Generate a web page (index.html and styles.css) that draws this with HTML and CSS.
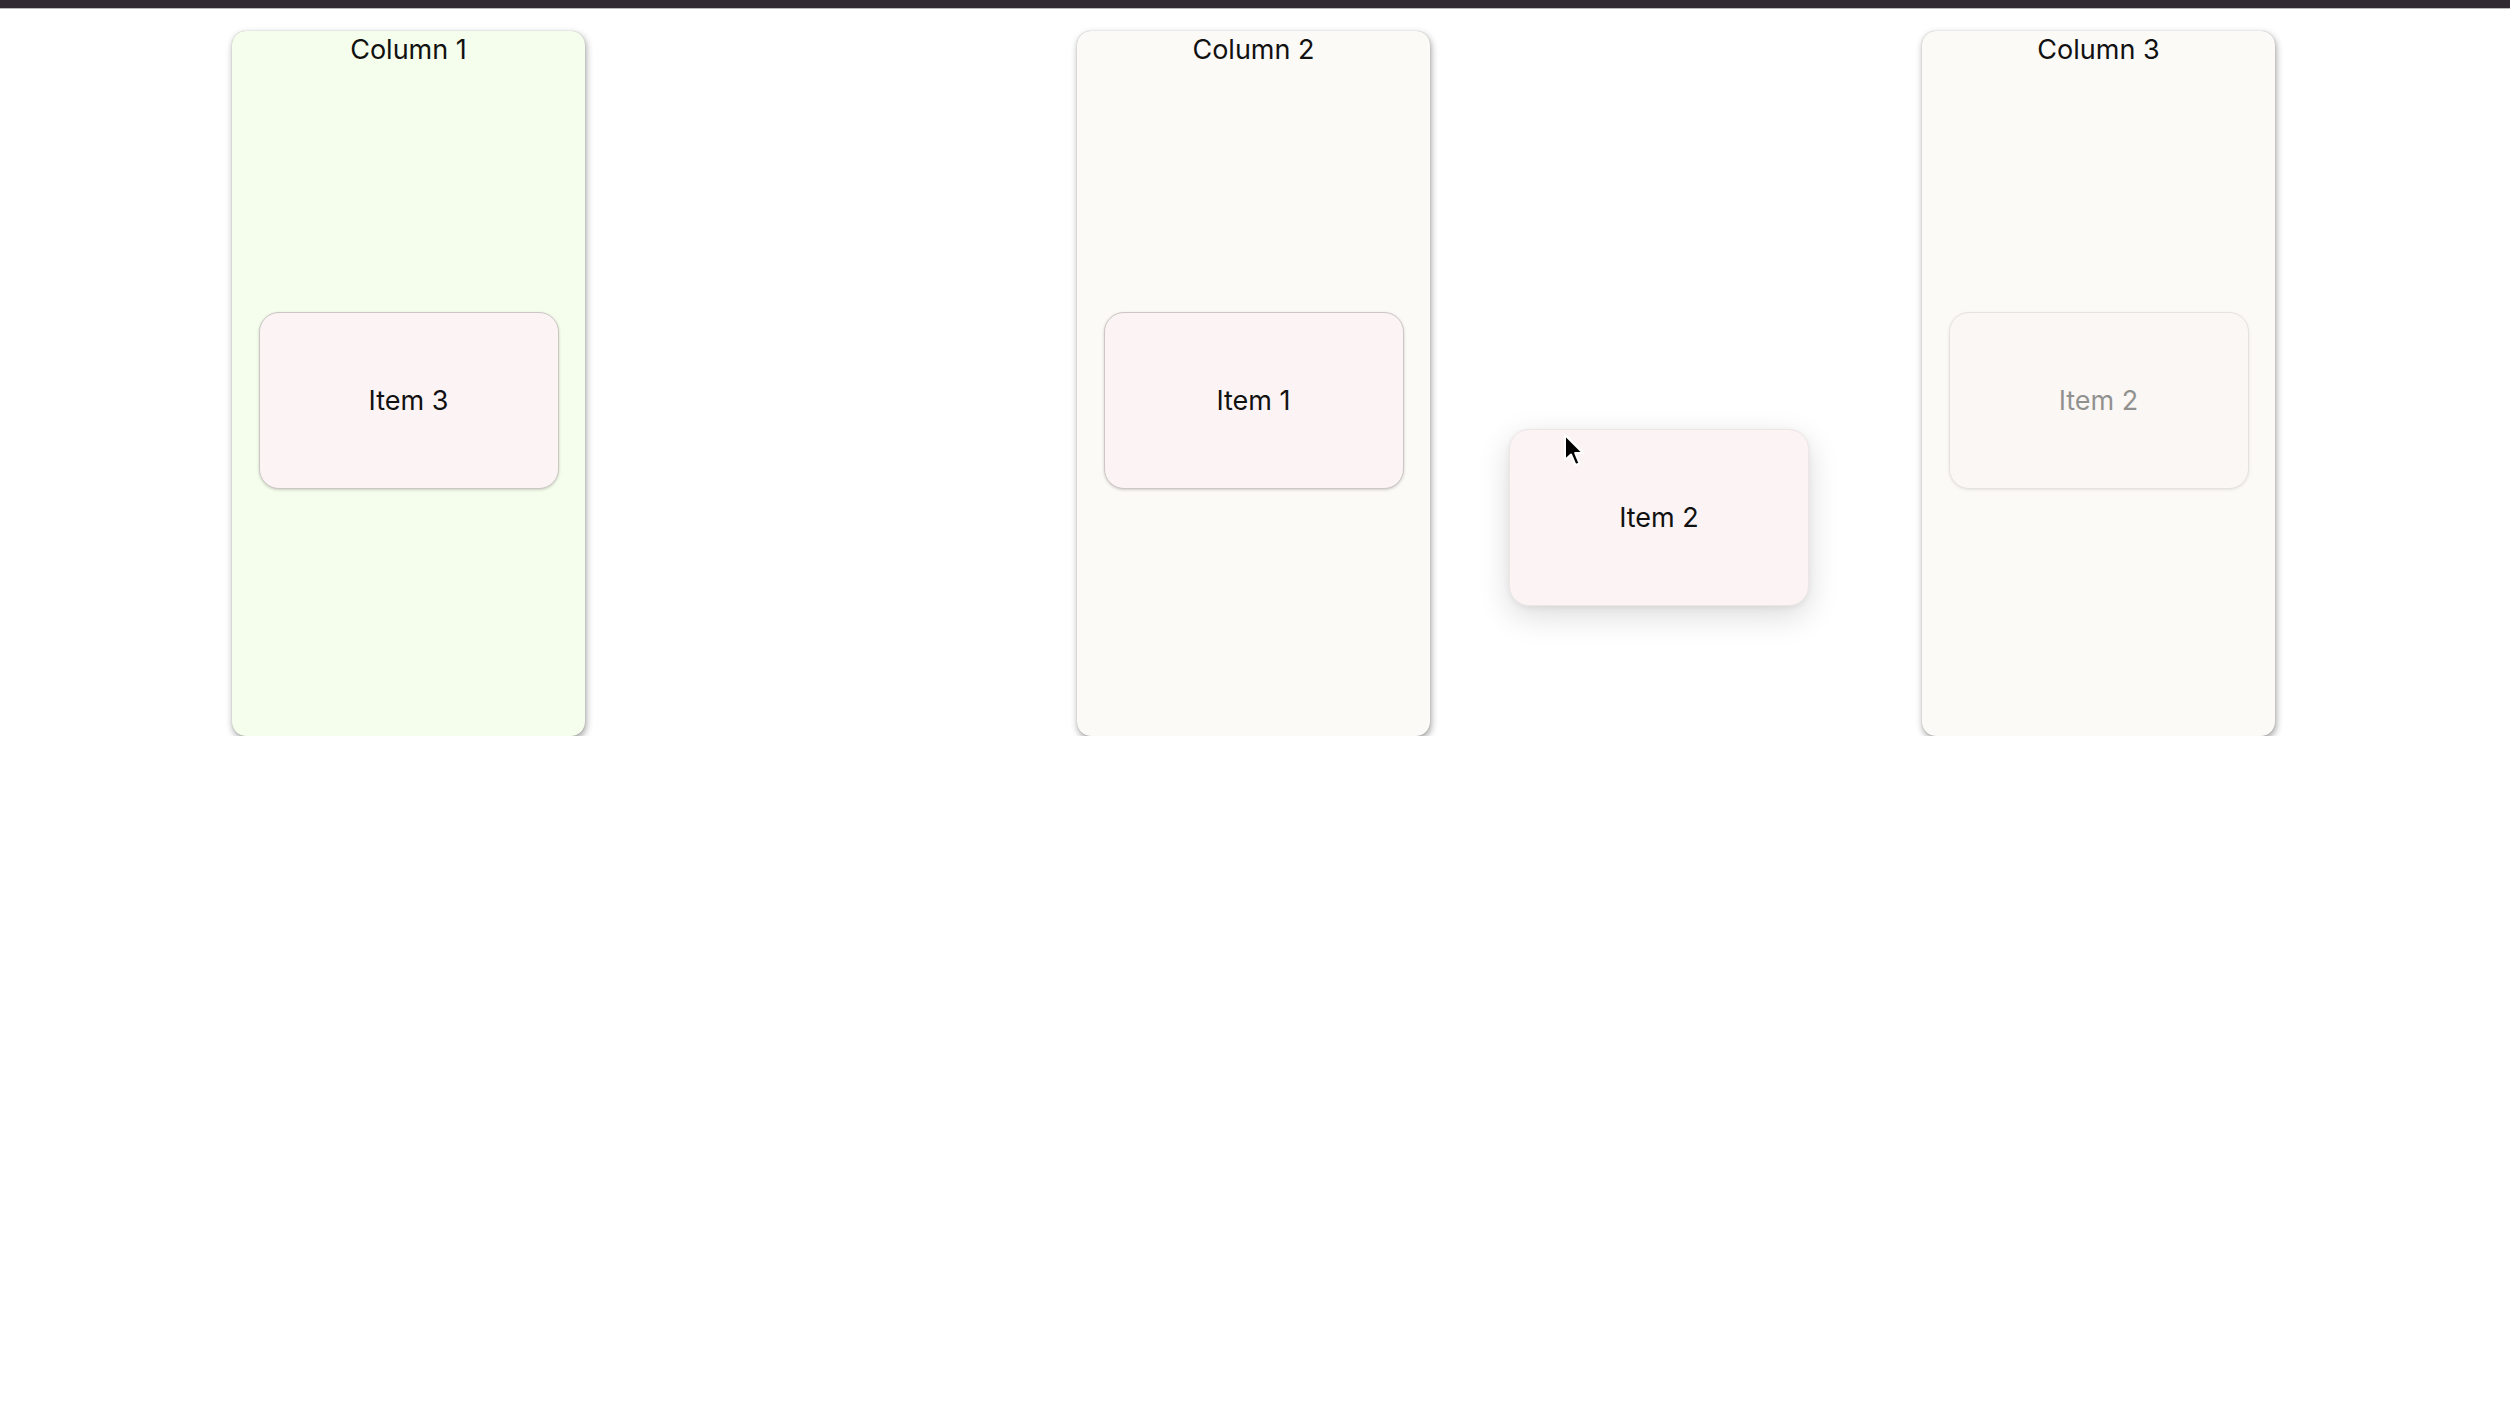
FILE: index.html
```html
<!DOCTYPE html>
<html>
<head>
<meta charset="utf-8">
<link rel="stylesheet" href="styles.css">
</head>
<body>
<div class="topbar"></div>
<div class="board">
  <div class="column column-green">
    <div class="title">Column 1</div>
    <div class="card">Item 3</div>
  </div>
  <div class="column">
    <div class="title">Column 2</div>
    <div class="card">Item 1</div>
  </div>
  <div class="column">
    <div class="title">Column 3</div>
    <div class="card card-ghost">Item 2</div>
  </div>
</div>
<div class="card card-drag">Item 2</div>
<svg class="cursor" width="22" height="36" viewBox="0 0 22 36">
  <path d="M2 2 L2 27 L8 21.5 L12.5 32 L16.5 30.3 L12.2 20 L20 20 Z" fill="#000" stroke="#fff" stroke-width="2" stroke-linejoin="round"/>
</svg>
</body>
</html>
```
FILE: styles.css
```css
html, body {
  margin: 0;
  padding: 0;
  background: #ffffff;
  font-family: Inter, "Noto Sans", "Liberation Sans", sans-serif;
  color: #111111;
}

.topbar {
  height: 8px;
  background: #312a33;
  border-bottom: 1px solid #b9b9b9;
}

.board {
  display: flex;
  gap: 492px;
  padding: 22px 0 0 232px;
}

.column {
  width: 353px;
  height: 705px;
  box-sizing: border-box;
  border-radius: 14px;
  background: #fbfaf6;
  box-shadow: 1px 3px 7px rgba(0, 0, 0, 0.38), 0 0 1px rgba(0, 0, 0, 0.3);
  display: flex;
  flex-direction: column;
  align-items: center;
}

.column-green {
  background: #f5fdec;
}

.title {
  font-size: 27px;
  line-height: 33px;
  height: 33px;
  text-align: center;
  padding-top: 2px;
}

.card {
  width: 300px;
  height: 177px;
  box-sizing: border-box;
  margin-top: 246px;
  border-radius: 20px;
  background: #fcf4f4;
  border: 1px solid #cbc7c4;
  box-shadow: 0 1px 3px rgba(0, 0, 0, 0.18);
  display: flex;
  align-items: center;
  justify-content: center;
  font-size: 27px;
}

.card-ghost {
  opacity: 0.45;
}

.card-drag {
  position: absolute;
  left: 1509px;
  top: 429px;
  margin: 0;
  border: 1px solid #ece6e6;
  box-shadow: 0 10px 32px rgba(0, 0, 0, 0.14), 0 2px 6px rgba(0, 0, 0, 0.06);
}

.cursor {
  position: absolute;
  left: 1563px;
  top: 433px;
}
```
